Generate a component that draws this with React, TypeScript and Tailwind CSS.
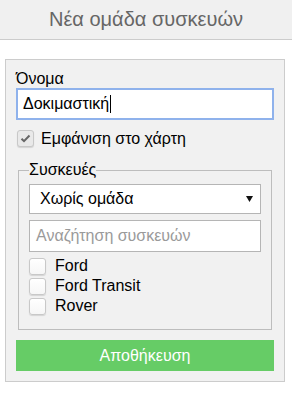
const devices = ["Ford", "Ford Transit", "Rover"];

function Box({ checked }: { checked?: boolean }) {
  return (
    <span
      className={
        "flex h-[17px] w-[17px] shrink-0 items-center justify-center rounded-[3px] border border-[#c8c8c8] shadow-[0_1px_1px_rgba(0,0,0,0.12)] " +
        (checked ? "bg-[#e9e9e9]" : "bg-[linear-gradient(#ffffff,#f6f6f6)]")
      }
    >
      {checked && (
        <svg width="11" height="9" viewBox="0 0 11 9">
          <path d="M1.5 4.8 L4 7.2 L9.5 1.5" fill="none" stroke="#666" strokeWidth="2" />
        </svg>
      )}
    </span>
  );
}

export default function App() {
  return (
    <div className="min-h-[398px] w-[292px] bg-white font-['Liberation_Sans',Arial,sans-serif] text-[16px] leading-[18px] text-black">
      <div className="flex h-[40px] items-center justify-center border-b border-[#cccccc] bg-[#f0f0f0] pb-[1px]">
        <h1 className="text-[20px] leading-[23px] text-[#666666]">Νέα ομάδα συσκευών</h1>
      </div>

      <div className="ml-[5px] mt-[19px] w-[280px] border border-[#cccccc] bg-[#f1f1f1] px-[10px] pb-[10px] pt-[10px]">
        <label className="block h-[18px]">Όνομα</label>
        <div className="flex h-[32px] items-center border-2 border-[#8fb2ec] bg-white px-[5px]">
          <span>Δοκιμαστική</span>
          <span className="ml-[1px] h-[18px] w-[1px] bg-black" />
        </div>

        <div className="mt-[10px] flex h-[17px] items-center gap-[7px] pl-[1px]">
          <Box checked />
          <span>Εμφάνιση στο χάρτη</span>
        </div>

        <fieldset className="mx-[2px] mt-[14px] border border-[#bdbdbd] px-[10px] pb-[13px] pt-[5px]">
          <legend className="h-[18px] px-0">Συσκευές</legend>
          <div className="flex h-[30px] items-center justify-between border border-[#b5b5b5] bg-white pl-[10px] pr-[7px]">
            <span>Χωρίς ομάδα</span>
            <svg width="7" height="6" viewBox="0 0 7 6">
              <polygon points="0,0 7,0 3.5,6" fill="#111" />
            </svg>
          </div>
          <div className="mt-[6px] flex h-[32px] items-center border border-[#b5b5b5] bg-white px-[6px] text-[#9a9a9a]">
            Αναζήτηση συσκευών
          </div>
          <div className="mt-[4px]">
            {devices.map((d) => (
              <div key={d} className="flex h-[20px] items-center gap-[9px]">
                <Box />
                <span>{d}</span>
              </div>
            ))}
          </div>
        </fieldset>

        <button className="mt-[10px] flex h-[31px] w-full items-center justify-center bg-[#66cc66] text-white">
          Αποθήκευση
        </button>
      </div>
    </div>
  );
}
